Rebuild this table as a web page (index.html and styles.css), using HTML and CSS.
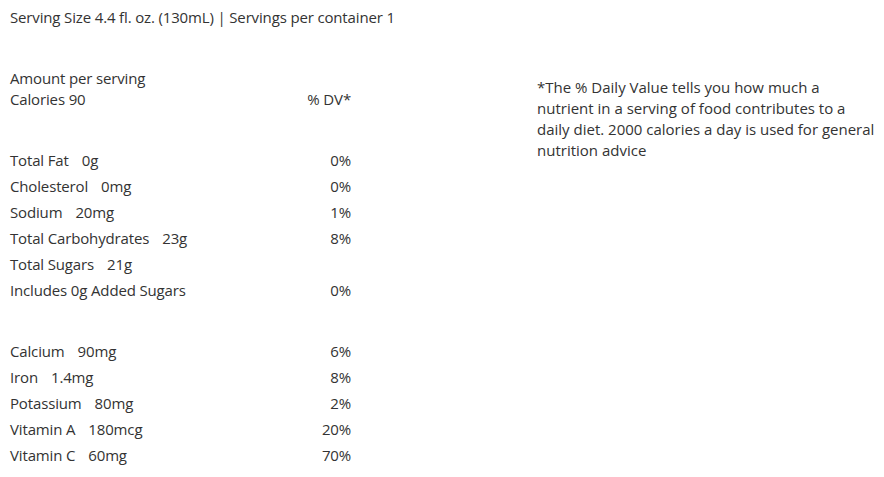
FILE: index.html
```html
<!DOCTYPE html>
<html>
<head>
<meta charset="utf-8">
<link rel="stylesheet" href="styles.css">
</head>
<body>
<div class="page">
  <p class="serving">Serving Size 4.4 fl. oz. (130mL) | Servings per container 1</p>
  <div class="panel">
    <div class="facts">
      <div class="head">
        <div>Amount per serving</div>
        <div class="row-line"><span>Calories 90</span><span>% DV*</span></div>
      </div>
      <div class="group">
        <div class="row"><span>Total Fat<span class="amt">0g</span></span><span>0%</span></div>
        <div class="row"><span>Cholesterol<span class="amt">0mg</span></span><span>0%</span></div>
        <div class="row"><span>Sodium<span class="amt">20mg</span></span><span>1%</span></div>
        <div class="row"><span>Total Carbohydrates<span class="amt">23g</span></span><span>8%</span></div>
        <div class="row"><span>Total Sugars<span class="amt">21g</span></span><span></span></div>
        <div class="row"><span>Includes 0g Added Sugars</span><span>0%</span></div>
      </div>
      <div class="group">
        <div class="row"><span>Calcium<span class="amt">90mg</span></span><span>6%</span></div>
        <div class="row"><span>Iron<span class="amt">1.4mg</span></span><span>8%</span></div>
        <div class="row"><span>Potassium<span class="amt">80mg</span></span><span>2%</span></div>
        <div class="row"><span>Vitamin A<span class="amt">180mcg</span></span><span>20%</span></div>
        <div class="row"><span>Vitamin C<span class="amt">60mg</span></span><span>70%</span></div>
      </div>
    </div>
    <p class="note">*The % Daily Value tells you how much a nutrient in a serving of food contributes to a daily diet. 2000 calories a day is used for general nutrition advice</p>
  </div>
</div>
</body>
</html>
```
FILE: styles.css
```css
html, body {
  margin: 0;
  padding: 0;
  background: #fff;
}
body {
  font-family: "Open Sans", "Liberation Sans", sans-serif;
  font-size: 15px;
  line-height: 21px;
  letter-spacing: -0.15px;
  color: #333;
}
.page {
  padding: 7px 10px 0 10px;
}
.serving {
  margin: 0;
}
.panel {
  display: flex;
  align-items: flex-start;
  margin-top: 40px;
}
.facts {
  width: 341px;
  flex: none;
}
.row-line, .row {
  display: flex;
  justify-content: space-between;
}
.group {
  margin-top: 37px;
}
.group + .group {
  margin-top: 35px;
}
.row {
  height: 26px;
  align-items: flex-start;
  padding-top: 3px;
  box-sizing: border-box;
}
.amt {
  margin-left: 13px;
}
.note {
  flex: none;
  margin: 9px 0 0 186px;
  width: 342px;
  letter-spacing: 0;
}
```
